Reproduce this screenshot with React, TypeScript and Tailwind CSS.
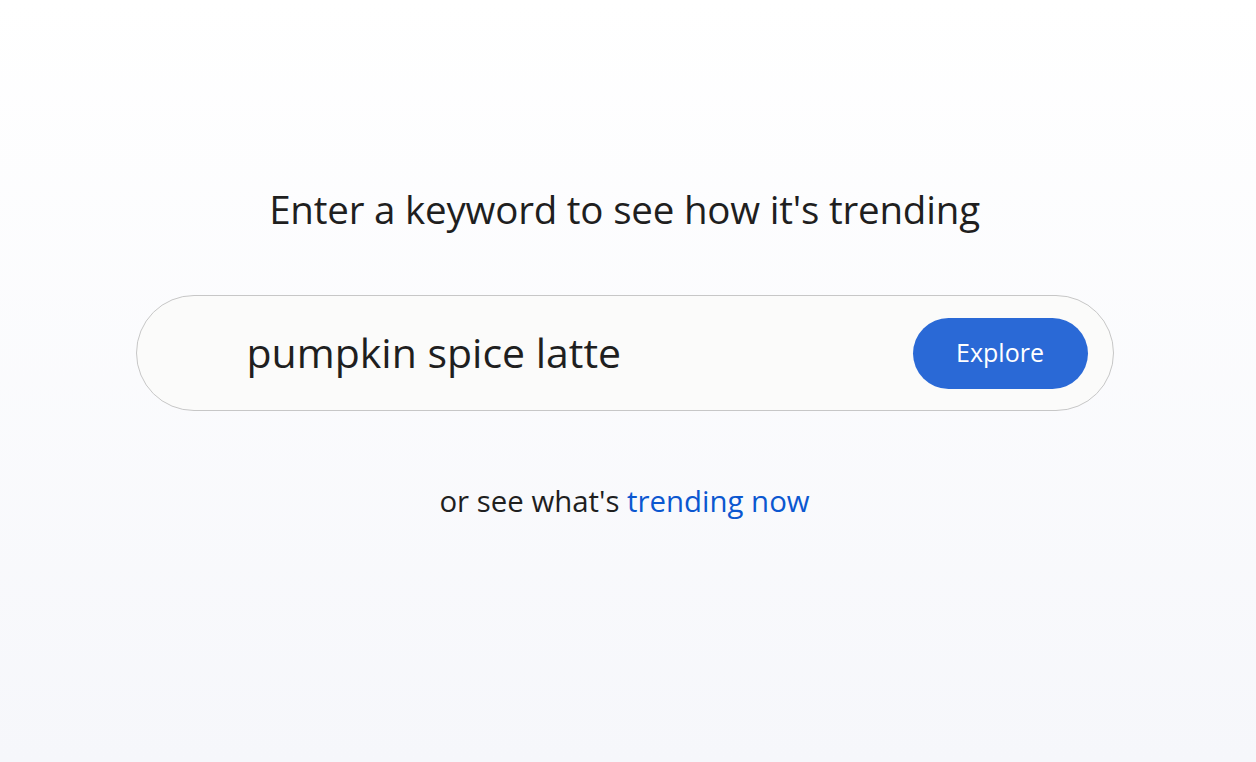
import React from 'react';

const App: React.FC = () => {
  return (
    <div
      className="w-full h-[762px] bg-gradient-to-b from-white to-[#f6f7fb] flex flex-col items-center pr-[7px] text-[#1f1f1f]"
      style={{ fontFamily: '"Open Sans", "Noto Sans", Arial, sans-serif' }}
    >
      {/* Heading */}
      <h1 className="mt-[183px] text-[38.5px] leading-[52px] font-normal tracking-[-0.2px]">
        Enter a keyword to see how it's trending
      </h1>

      {/* Search box */}
      <div className="mt-[60px] w-[978px] h-[116px] rounded-full border border-[#c7c7c7] bg-[#fbfbfa] flex items-center pl-[110px] pr-[25px]">
        <input
          className="flex-1 bg-transparent outline-none text-[41px] text-[#1f1f1f]"
          defaultValue="pumpkin spice latte"
        />
        <button className="w-[175px] h-[71px] rounded-full bg-[#2a69d6] text-white text-[25px]">
          Explore
        </button>
      </div>

      {/* Trending link */}
      <p className="mt-[70px] text-[29.4px] leading-[40px]">
        or see what's <a className="text-[#0b57d0]">trending now</a>
      </p>
    </div>
  );
};

export default App;
